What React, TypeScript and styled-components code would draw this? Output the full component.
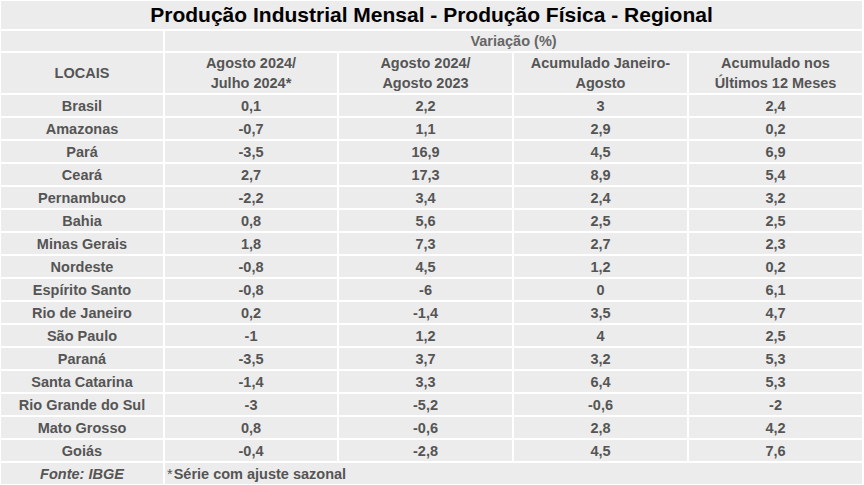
import React from 'react';
import styled, { createGlobalStyle } from 'styled-components';

const rows: [string, string, string, string, string][] = [
  ['Brasil', '0,1', '2,2', '3', '2,4'],
  ['Amazonas', '-0,7', '1,1', '2,9', '0,2'],
  ['Pará', '-3,5', '16,9', '4,5', '6,9'],
  ['Ceará', '2,7', '17,3', '8,9', '5,4'],
  ['Pernambuco', '-2,2', '3,4', '2,4', '3,2'],
  ['Bahia', '0,8', '5,6', '2,5', '2,5'],
  ['Minas Gerais', '1,8', '7,3', '2,7', '2,3'],
  ['Nordeste', '-0,8', '4,5', '1,2', '0,2'],
  ['Espírito Santo', '-0,8', '-6', '0', '6,1'],
  ['Rio de Janeiro', '0,2', '-1,4', '3,5', '4,7'],
  ['São Paulo', '-1', '1,2', '4', '2,5'],
  ['Paraná', '-3,5', '3,7', '3,2', '5,3'],
  ['Santa Catarina', '-1,4', '3,3', '6,4', '5,3'],
  ['Rio Grande do Sul', '-3', '-5,2', '-0,6', '-2'],
  ['Mato Grosso', '0,8', '-0,6', '2,8', '4,2'],
  ['Goiás', '-0,4', '-2,8', '4,5', '7,6'],
];

const headers = [
  ['Agosto 2024/', 'Julho 2024*'],
  ['Agosto 2024/', 'Agosto 2023'],
  ['Acumulado Janeiro-', 'Agosto'],
  ['Acumulado nos', 'Últimos 12 Meses'],
];

const App: React.FC = () => {
  return (
    <>
      <GlobalStyle />
      <Table>
        <Title>Produção Industrial Mensal - Produção Física - Regional</Title>
        <Cell />
        <Cell $span={4} $muted>
          Variação (%)
        </Cell>
        <Cell>LOCAIS</Cell>
        {headers.map((h, i) => (
          <Cell key={i}>
            {h[0]}
            <br />
            {h[1]}
          </Cell>
        ))}
        {rows.map((r) =>
          r.map((v, i) => <Cell key={r[0] + i}>{v}</Cell>),
        )}
        <Source>Fonte: IBGE</Source>
        <Note>
          <Star>*</Star>Série com ajuste sazonal
        </Note>
      </Table>
    </>
  );
};

export default App;

const GlobalStyle = createGlobalStyle`
  body {
    margin: 0;
    background: #fff;
    font-family: 'Liberation Sans', Arial, sans-serif;
  }
`;

const Table = styled.div`
  display: grid;
  grid-template-columns: 162px 172px 173px 173px 173px;
  grid-template-rows: 28px 20px 40px repeat(17, 21px);
  gap: 2px;
  padding: 1px 2px 1px 1px;
  width: 864px;
  box-sizing: border-box;
  background: #fff;
`;

const Cell = styled.div<{ $span?: number; $muted?: boolean }>`
  grid-column: span ${(p) => p.$span ?? 1};
  background: #ececec;
  color: ${(p) => (p.$muted ? '#666' : '#555')};
  font-size: 14.5px;
  font-weight: bold;
  display: flex;
  align-items: center;
  justify-content: center;
  text-align: center;
  line-height: 20px;
`;

const Title = styled(Cell)`
  grid-column: span 5;
  color: #000;
  font-size: 21px;
`;

const Source = styled(Cell)`
  font-style: italic;
`;

const Note = styled(Cell)`
  grid-column: span 4;
  justify-content: flex-start;
  padding-left: 2px;
`;

const Star = styled.span`
  font-weight: normal;
  margin-right: 1px;
`;
